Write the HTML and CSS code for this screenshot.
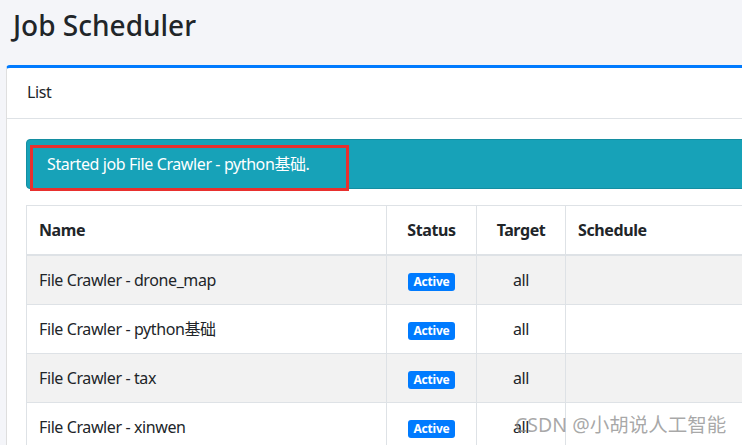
FILE: index.html
```html
<!DOCTYPE html>
<html lang="en">
<head>
<meta charset="utf-8">
<title>Job Scheduler</title>
<link rel="stylesheet" href="styles.css">
</head>
<body>
<div class="page">
  <h1 class="title">Job Scheduler</h1>
  <div class="card">
    <div class="card-header">List</div>
    <div class="card-body">
      <div class="alert">Started job File Crawler - python基础.</div>
      <table class="table">
        <thead>
          <tr>
            <th class="col-name">Name</th>
            <th class="col-status center">Status</th>
            <th class="col-target center">Target</th>
            <th class="col-schedule">Schedule</th>
          </tr>
        </thead>
        <tbody>
          <tr class="odd">
            <td>File Crawler - drone_map</td>
            <td class="center"><span class="badge">Active</span></td>
            <td class="center">all</td>
            <td></td>
          </tr>
          <tr>
            <td>File Crawler - python基础</td>
            <td class="center"><span class="badge">Active</span></td>
            <td class="center">all</td>
            <td></td>
          </tr>
          <tr class="odd">
            <td>File Crawler - tax</td>
            <td class="center"><span class="badge">Active</span></td>
            <td class="center">all</td>
            <td></td>
          </tr>
          <tr>
            <td>File Crawler - xinwen</td>
            <td class="center"><span class="badge">Active</span></td>
            <td class="center">all</td>
            <td></td>
          </tr>
        </tbody>
      </table>
    </div>
  </div>
</div>
<div class="highlight"></div>
<div class="watermark">CSDN @小胡说人工智能</div>
</body>
</html>
```
FILE: styles.css
```css
html, body {
  margin: 0;
  padding: 0;
  background: #f4f5f9;
  overflow: hidden;
}
body {
  font-family: "Noto Sans", "Noto Sans CJK SC", sans-serif;
  font-size: 16px;
  line-height: 1.5;
  color: #212529;
  width: 742px;
  height: 445px;
  position: relative;
}
.page {
  padding: 0 0 0 6px;
  width: 1100px;
}
.title {
  margin: 0;
  padding: 9px 0 0 7px;
  height: 56px;
  font-size: 28px;
  font-weight: 500;
  line-height: 1.2;
  color: #212529;
}
.card {
  background: #fff;
  border: 1px solid rgba(0,0,0,.125);
  border-top: 3px solid #007bff;
  border-radius: 4px 4px 0 0;
  letter-spacing: -0.4px;
}
.card-header {
  padding: 12px 20px;
  height: 26px;
  border-bottom: 1px solid #dee2e6;
  color: #212529;
}
.card-body {
  padding: 20px 19px;
}
.alert {
  background: #17a2b8;
  color: #fff;
  padding: 12px 20px;
  border: 1px solid #148ea1;
  border-radius: 4px;
  margin-bottom: 16px;
}
.table {
  border-collapse: collapse;
  width: 100%;
  background: #fff;
}
.table th, .table td {
  border: 1px solid #dee2e6;
  padding: 12px;
  text-align: left;
  vertical-align: middle;
  height: 24px;
}
.table th {
  font-weight: 700;
  border-bottom-width: 2px;
}
.table .center {
  text-align: center;
}
.odd td {
  background: #f2f2f2;
}
.col-name { width: 335px; }
.col-status { width: 65px; }
.col-target { width: 64px; }
.badge {
  display: inline-block;
  background: #007bff;
  color: #fff;
  font-size: 12px;
  font-weight: 700;
  line-height: 1;
  letter-spacing: -0.2px;
  padding: 3px 5px;
  border-radius: 3px;
  vertical-align: middle;
}
.highlight {
  position: absolute;
  left: 30px;
  top: 145px;
  width: 313px;
  height: 40px;
  border: 3px solid #e8302e;
}
.watermark {
  position: absolute;
  left: 515px;
  top: 410px;
  font-size: 19.5px;
  color: rgba(140,140,140,.75);
  white-space: nowrap;
  font-family: "Noto Sans", "Noto Sans CJK SC", sans-serif;
}
```
